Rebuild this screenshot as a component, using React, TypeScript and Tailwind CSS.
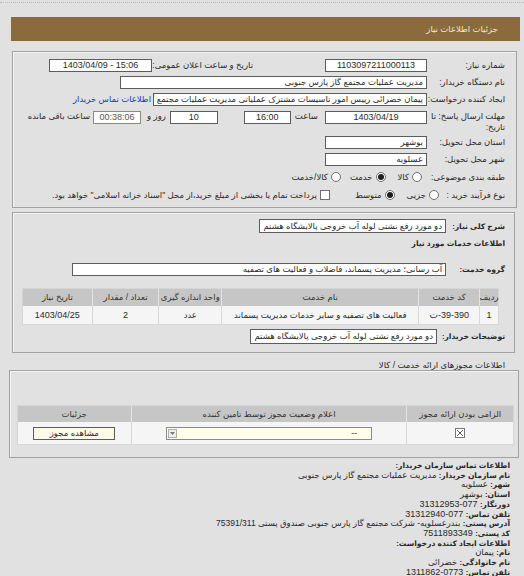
import React from 'react'

// ── Shared styles ─────────────────────────────────────────────────────────────
const BOX = 'h-[13px] border border-[#5c5c5c] bg-white leading-[11px] px-[3px] whitespace-nowrap overflow-hidden'
const NUM = 'text-[9px]'
const B = 'font-bold text-[7.6px]'
const PANEL = 'border border-[#a2a2a2] shadow-[inset_1px_1px_0_#f4f4f4]'

function Radio({ on = false }: { on?: boolean }) {
  return (
    <span className="w-[10px] h-[10px] rounded-full border border-[#6f6f6f] bg-white flex items-center justify-center shrink-0">
      {on && <span className="w-[6px] h-[6px] rounded-full bg-[#1e1e1e]" />}
    </span>
  )
}

function Row({ label, children, h = 'h-[17px]', lw = 'w-[78px]' }: {
  label: React.ReactNode; children?: React.ReactNode; h?: string; lw?: string
}) {
  return (
    <div className={`flex items-center ${h} whitespace-nowrap`}>
      <div className={`${lw} shrink-0`}>{label}</div>
      {children}
    </div>
  )
}

// ── Data ──────────────────────────────────────────────────────────────────────
const serviceCols = [
  { title: 'ردیف', w: 'w-[19px]' },
  { title: 'کد خدمت', w: 'w-[61px]' },
  { title: 'نام خدمت', w: 'w-[198px]' },
  { title: 'واحد اندازه گیری', w: 'w-[63px]' },
  { title: 'تعداد / مقدار', w: 'w-[67px]' },
  { title: 'تاریخ نیاز', w: 'w-[69px]' },
]

const contact: [string, string][] = [
  ['اطلاعات تماس سازمان خریدار:', ''],
  ['نام سازمان خریدار:', 'مدیریت عملیات مجتمع گاز پارس جنوبی'],
  ['شهر:', 'عسلویه'],
  ['استان:', 'بوشهر'],
  ['دورنگار:', '077-31312953'],
  ['تلفن تماس:', '077-31312940'],
  ['آدرس پستی:', 'بندرعسلویه- شرکت مجتمع گاز پارس جنوبی صندوق پستی 75391/311'],
  ['کد پستی:', '7511893349'],
  ['اطلاعات ایجاد کننده درخواست:', ''],
  ['نام:', 'پیمان'],
  ['نام خانوادگی:', 'خضرائی'],
  ['تلفن تماس:', '0773-1311862'],
]

export default function App() {
  return (
    <div
      dir="rtl"
      className="w-[524px] h-[576px] overflow-hidden bg-[#e1e1e1] text-[8.5px] leading-[11px] text-[#2a2a2a] font-['Liberation_Sans','DejaVu_Sans',sans-serif]"
    >
      {/* dotted top rule */}
      <div className="pt-[2px]">
        <div className="border-t border-dotted border-[#b9b9b9]" />
      </div>

      {/* ── Header bar ── */}
      <div className="mt-[14px] mr-[4px] ml-[11px] h-[24px] bg-[#8b6b3d] flex items-center pr-[22px] text-[#f1e8d4]">
        جزئیات اطلاعات نیاز
      </div>

      {/* ── Panel 1 ── */}
      <div className={`${PANEL} mt-[10px] mr-[7px] ml-[12px] h-[157px] pt-[5px] pr-[11px]`}>
        <Row label="شماره نیاز:">
          <div className={`${BOX} ${NUM} w-[102px] text-center`}>1103097211000113</div>
          <div className="w-[173px] pr-[72px]">تاریخ و ساعت اعلان عمومی:</div>
          <div dir="ltr" className={`${BOX} ${NUM} w-[103px] text-center`}>1403/04/09 - 15:06</div>
        </Row>
        <Row label="نام دستگاه خریدار:">
          <div className={`${BOX} w-[307px]`}>مدیریت عملیات مجتمع گاز پارس جنوبی</div>
        </Row>
        <Row label="ایجاد کننده درخواست:">
          <div className={`${BOX} w-[274px]`}>
            پیمان خضرائی رییس امور تاسیسات مشترک عملیاتی مدیریت عملیات مجتمع گاز پارس جنوبی
          </div>
          <span className="mr-[2px] text-[#1b3aa6]">اطلاعات تماس خریدار</span>
        </Row>
        <Row h="h-[26px] items-start pt-[3px]" label={<>مهلت ارسال پاسخ: تا<br />تاریخ:</>}>
          <div className={`${BOX} ${NUM} w-[102px] text-center`}>1403/04/19</div>
          <span className="mr-[7px]">ساعت</span>
          <div className={`${BOX} ${NUM} w-[47px] mr-[4px] text-center`}>16:00</div>
          <div className={`${BOX} ${NUM} w-[48px] mr-[26px] text-center`}>10</div>
          <span className="mr-[4px]">روز و</span>
          <div className={`${BOX} ${NUM} w-[48px] mr-[6px] text-center bg-[#f4f1df] border-[#8a8a80] text-[#555]`}>00:38:06</div>
          <span className="mr-[3px]">ساعت باقی مانده</span>
        </Row>
        <Row label="استان محل تحویل:">
          <div className={`${BOX} w-[102px]`}>بوشهر</div>
        </Row>
        <Row label="شهر محل تحویل:">
          <div className={`${BOX} w-[102px]`}>عسلویه</div>
        </Row>
        <Row h="h-[18px]" label="طبقه بندی موضوعی:">
          <div className="flex items-center mr-[5px]">
            <Radio />
            <span className="mr-[3px]">کالا</span>
            <span className="mr-[12px]"><Radio on /></span>
            <span className="mr-[3px]">خدمت</span>
            <span className="mr-[9px]"><Radio /></span>
            <span className="mr-[3px]">کالا/خدمت</span>
          </div>
        </Row>
        <Row h="h-[18px]" lw="w-[66px]" label="نوع فرآیند خرید :">
          <Radio />
          <span className="mr-[3px]">جزیی</span>
          <span className="mr-[12px]"><Radio on /></span>
          <span className="mr-[3px]">متوسط</span>
          <span className="mr-[25px] w-[10px] h-[10px] border border-[#6f6f6f] bg-white shrink-0" />
          <span className="mr-[3px]">
            پرداخت تمام یا بخشی از مبلغ خرید،از محل "اسناد خزانه اسلامی" خواهد بود.
          </span>
        </Row>
      </div>

      {/* ── Panel 2 ── */}
      <div className={`${PANEL} mt-[4px] mr-[9px] ml-[12px] h-[141px] pt-[6px] pr-[9px] whitespace-nowrap`}>
        <div className="flex items-center h-[14px]">
          <div className={`w-[59px] shrink-0 ${B}`}>شرح کلی نیاز:</div>
          <div className={`${BOX} h-[14px] leading-[12px]`}>دو مورد رفع نشتی لوله آب خروجی پالایشگاه هشتم</div>
        </div>
        <div className={`mt-[5px] h-[12px] ${B}`}>اطلاعات خدمات مورد نیاز</div>
        <div className="flex items-center mt-[13px] h-[13px]">
          <div className={`w-[59px] shrink-0 ${B}`}>گروه خدمت:</div>
          <div className={`${BOX} w-[374px]`}>آب رسانی؛ مدیریت پسماند، فاضلاب و فعالیت های تصفیه</div>
        </div>

        <div className="mt-[12px] mr-[6px] w-[477px] border border-[#d6d6d6]">
          <div className="flex h-[17px] bg-[#c6c6c6]">
            {serviceCols.map((c, i) => (
              <div key={i} className={`${c.w} flex items-center justify-center border-l border-[#e4e4e4] last:border-l-0 text-[#333]`}>
                {c.title}
              </div>
            ))}
          </div>
          <div className="flex h-[18px] bg-[#f5f5f5]">
            {['1', 'CODE', 'فعالیت های تصفیه و سایر خدمات مدیریت پسماند', 'عدد', '2', '1403/04/25'].map((v, i) => (
              <div key={i} className={`${serviceCols[i].w} flex items-center justify-center border-l border-[#d8d8d8] last:border-l-0`}>
                {v === 'CODE' ? <bdo dir="ltr" className={NUM}>ت-39-390</bdo> : <span className={/\d/.test(v) ? NUM : ''}>{v}</span>}
              </div>
            ))}
          </div>
        </div>

        <div className="flex items-center mt-[4px] h-[15px]">
          <div className={`w-[68px] shrink-0 ${B}`}>توضیحات خریدار:</div>
          <div className={`${BOX} h-[15px] leading-[13px]`}>دو مورد رفع نشتی لوله آب خروجی پالایشگاه هشتم</div>
        </div>
      </div>

      {/* ── Licences ── */}
      <div className="mt-[7px] mr-[19px] h-[10px] leading-[10px]">اطلاعات مجوزهای ارائه خدمت / کالا</div>
      <div className={`${PANEL} mr-[5px] ml-[9px] h-[88px] pt-[34px] pr-[4px] whitespace-nowrap`}>
        <div className="w-[497px] border border-[#d6d6d6]">
          <div className="flex h-[16px] bg-[#c6c6c6] text-[#333]">
            <div className="w-[107px] flex items-center justify-center border-l border-[#e4e4e4]">الزامی بودن ارائه مجوز</div>
            <div className="w-[277px] flex items-center justify-center border-l border-[#e4e4e4]">اعلام وضعیت مجوز توسط تامین کننده</div>
            <div className="w-[113px] flex items-center justify-center">جزئیات</div>
          </div>
          <div className="flex h-[22px] bg-[#f5f5f5]">
            <div className="w-[107px] flex items-center justify-center border-l border-[#d8d8d8]">
              <svg width="10" height="10" viewBox="0 0 10 10">
                <rect x="0.5" y="0.5" width="9" height="9" fill="#fff" stroke="#777" />
                <path d="M2 2L8 8M8 2L2 8" stroke="#555" strokeWidth="1" />
              </svg>
            </div>
            <div className="w-[277px] flex items-center justify-center border-l border-[#d8d8d8]">
              <div className="w-[206px] h-[13px] border border-[#8a8a8a] bg-[#ffffec] flex items-center justify-between pr-[14px] pl-[1px]">
                <span>--</span>
                <span className="w-[9px] h-[9px] border border-[#b0b0b0] bg-[#eee] flex items-center justify-center">
                  <svg width="5" height="3" viewBox="0 0 5 3"><path d="M0 0H5L2.5 3Z" fill="#777" /></svg>
                </span>
              </div>
            </div>
            <div className="w-[113px] flex items-center justify-center">
              <div className="w-[82px] h-[13px] border border-[#5c5c5c] bg-[#fbfae6] flex items-center justify-center">مشاهده مجوز</div>
            </div>
          </div>
        </div>
      </div>

      {/* ── Contact ── */}
      <div className="mt-[3px] mr-[14px] leading-[9.7px]">
        {contact.map(([k, v], i) => (
          <div key={i} className="whitespace-nowrap">
            <span className={B}>{k}</span>
            {v && <span className={/^[\d-]+$/.test(v) ? NUM : ''}> {v}</span>}
          </div>
        ))}
      </div>
    </div>
  )
}
